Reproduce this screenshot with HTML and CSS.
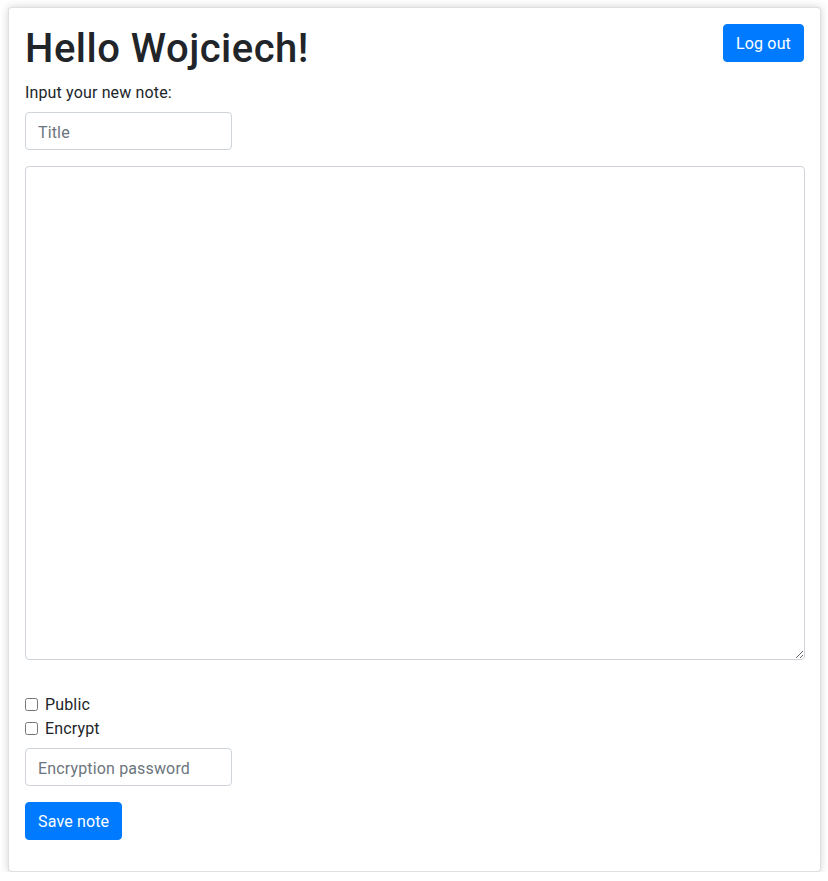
FILE: index.html
```html
<!DOCTYPE html>
<html lang="en">
<head>
<meta charset="utf-8">
<title>Notes</title>
<link rel="stylesheet" href="styles.css">
</head>
<body>
<div class="card">
  <div class="header">
    <h1 class="title">Hello Wojciech!</h1>
    <button class="btn">Log out</button>
  </div>
  <form class="note-form">
    <label class="label">Input your new note:</label>
    <input class="input input-short" type="text" placeholder="Title">
    <textarea class="input textarea"></textarea>
    <div class="checks">
      <label class="check"><input type="checkbox" class="box"> <span class="check-text">Public</span></label>
      <label class="check"><input type="checkbox" class="box"> <span class="check-text">Encrypt</span></label>
    </div>
    <input class="input input-short" type="password" placeholder="Encryption password">
    <div class="actions"><button class="btn" type="button">Save note</button></div>
  </form>
</div>
</body>
</html>
```

FILE: styles.css
```css
html, body {
  margin: 0;
  padding: 0;
  background: #fff;
}
body {
  padding: 7px 7px 0 8px;
  font-family: Roboto, "Noto Sans", sans-serif;
  font-size: 16px;
  line-height: 1.5;
  color: #212529;
  letter-spacing: 0.15px;
}
.card {
  width: 813px;
  box-sizing: border-box;
  border: 1px solid rgba(0,0,0,.125);
  border-radius: 4px;
  box-shadow: 0 0 8px rgba(0,0,0,.18);
  padding: 16px 16px 31px 16px;
  background: #fff;
}
.header {
  display: flex;
  justify-content: space-between;
  align-items: flex-start;
}
.title {
  margin: 0 0 8px 0;
  padding-top: 2px;
  font-size: 40px;
  line-height: 46px;
  font-weight: 500;
  letter-spacing: 0.5px;
}
.btn {
  font-family: inherit;
  font-size: 16px;
  line-height: 24px;
  letter-spacing: 0.15px;
  padding: 7px 12px 5px 12px;
  border: 1px solid #007bff;
  background: #007bff;
  color: #fff;
  border-radius: 4px;
  cursor: pointer;
}
.note-form {
  display: flex;
  flex-direction: column;
  align-items: flex-start;
}
.label {
  display: block;
  padding-top: 2px;
  line-height: 22px;
  margin-bottom: 8px;
}
.input {
  font-family: inherit;
  font-size: 16px;
  line-height: 24px;
  letter-spacing: 0.15px;
  color: #495057;
  padding: 7px 12px 5px 12px;
  border: 1px solid #ced4da;
  border-radius: 4px;
  box-sizing: border-box;
  background: #fff;
}
.input::placeholder {
  color: #6c757d;
}
.input-short {
  width: 207px;
  height: 38px;
}
.textarea {
  margin-top: 16px;
  width: 780px;
  height: 494px;
  resize: vertical;
}
.checks {
  margin-top: 32px;
  display: flex;
  flex-direction: column;
}
.check {
  display: flex;
  align-items: center;
  height: 24px;
}
.check-text {
  padding-top: 2px;
}
.box {
  margin: 0 7px 0 0;
  width: 13px;
  height: 13px;
}
.checks + .input {
  margin-top: 8px;
}
.actions {
  margin-top: 16px;
}
```
